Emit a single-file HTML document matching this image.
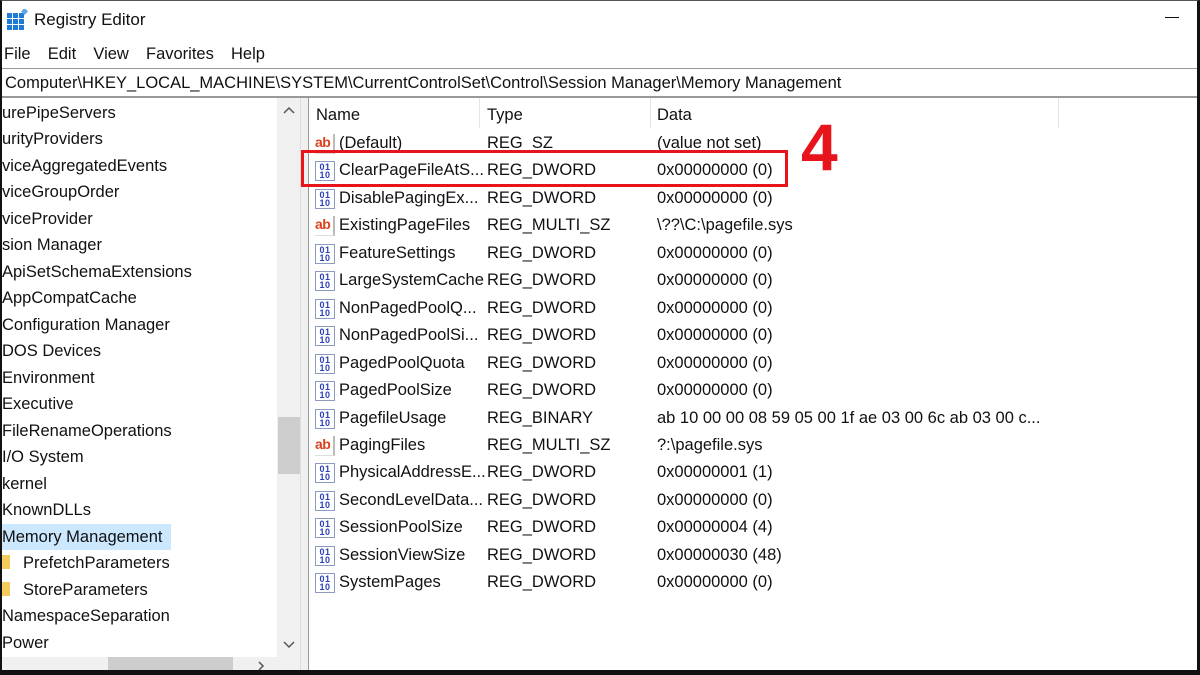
<!DOCTYPE html>
<html><head><meta charset="utf-8"><style>
*{margin:0;padding:0;box-sizing:border-box}
body{width:1200px;height:675px;overflow:hidden;background:#fff;font-family:"Liberation Sans",sans-serif;font-size:16.5px;color:#111;position:relative}
.a{position:absolute;white-space:nowrap}
.frame{position:absolute;left:0;top:0;width:1200px;height:675px;border-left:2px solid #111;border-right:3px solid #111;border-bottom:5px solid #111;border-top:1px solid #555;pointer-events:none}
.tr{position:absolute;left:2px;height:26px;line-height:26px}
.r{position:absolute;left:312px;height:27px;line-height:27px;width:760px}
.r span{position:absolute}
.ic{position:absolute;left:3px;top:4px;width:20px;height:20px}
.ab{color:#d9431e;font-weight:bold;font-size:14px;line-height:16px;border-right:2px solid #bbb;border-bottom:1px solid #ddd;letter-spacing:-0.5px}
.bin{border:1px solid #8a9cc0;background:#fff;font:bold 9px/8px "Liberation Sans",sans-serif;color:#2a3fb8;text-align:center;padding-top:1px;letter-spacing:0.5px}
</style></head><body>
<div class="a" style="left:7px;top:9px;width:20px;height:20px">
<svg width="22" height="22"><g fill="#1e7bd6"><rect x="0" y="4" width="5" height="5"/><rect x="6" y="4" width="5" height="5"/><rect x="12" y="4" width="5" height="5"/><rect x="0" y="10" width="5" height="5"/><rect x="6" y="10" width="5" height="5"/><rect x="12" y="10" width="5" height="5"/><rect x="0" y="16" width="5" height="5"/><rect x="6" y="16" width="5" height="5"/><rect x="12" y="16" width="5" height="5"/></g><rect x="15" y="0" width="5" height="5" fill="#5aa7e8" transform="rotate(45 17.5 2.5)"/></svg></div>
<div class="a" style="left:34px;top:10px;font-size:17px">Registry Editor</div>
<div class="a" style="left:1165px;top:17px;width:14px;height:1px;background:#111"></div>
<div class="a" style="left:4px;top:45px;font-size:16.5px;word-spacing:4px">File&nbsp; Edit&nbsp; View&nbsp; Favorites&nbsp; Help</div>
<div class="a" style="left:0;top:68px;width:1200px;height:1px;background:#999"></div>
<div class="a" style="left:5px;top:74px;font-size:16.5px">Computer\HKEY_LOCAL_MACHINE\SYSTEM\CurrentControlSet\Control\Session Manager\Memory Management</div>
<div class="a" style="left:0;top:96px;width:1200px;height:2px;background:#999"></div>
<div class="a" style="left:0;top:98px;width:300px;height:572px;overflow:hidden">
<div class="tr" style="top:2px">urePipeServers</div>
<div class="tr" style="top:28px">urityProviders</div>
<div class="tr" style="top:55px">viceAggregatedEvents</div>
<div class="tr" style="top:81px">viceGroupOrder</div>
<div class="tr" style="top:108px">viceProvider</div>
<div class="tr" style="top:134px">sion Manager</div>
<div class="tr" style="top:161px">ApiSetSchemaExtensions</div>
<div class="tr" style="top:187px">AppCompatCache</div>
<div class="tr" style="top:214px">Configuration Manager</div>
<div class="tr" style="top:240px">DOS Devices</div>
<div class="tr" style="top:267px">Environment</div>
<div class="tr" style="top:293px">Executive</div>
<div class="tr" style="top:320px">FileRenameOperations</div>
<div class="tr" style="top:346px">I/O System</div>
<div class="tr" style="top:373px">kernel</div>
<div class="tr" style="top:399px">KnownDLLs</div>
<div class="tr" style="top:426px;left:0;padding-left:2px;background:#cce8ff;width:171px">Memory Management</div>
<div class="a" style="left:0;top:457px;width:10px;height:14px;background:#f4cc5e"></div>
<div class="tr" style="top:452px;left:23px">PrefetchParameters</div>
<div class="a" style="left:0;top:484px;width:10px;height:14px;background:#f4cc5e"></div>
<div class="tr" style="top:479px;left:23px">StoreParameters</div>
<div class="tr" style="top:505px">NamespaceSeparation</div>
<div class="tr" style="top:532px">Power</div>
</div>
<div class="a" style="left:277px;top:98px;width:23px;height:559px;background:#f0f0f0"></div>
<div class="a" style="left:278px;top:417px;width:22px;height:57px;background:#cdcdcd"></div>
<svg class="a" style="left:282px;top:106px" width="14" height="10"><path d="M2 7 L7 2 L12 7" stroke="#555" stroke-width="1.5" fill="none"/></svg>
<svg class="a" style="left:282px;top:640px" width="14" height="10"><path d="M2 2 L7 7 L12 2" stroke="#555" stroke-width="1.5" fill="none"/></svg>
<div class="a" style="left:0;top:657px;width:300px;height:13px;background:#f0f0f0"></div>
<div class="a" style="left:108px;top:657px;width:125px;height:13px;background:#cdcdcd"></div>
<svg class="a" style="left:256px;top:660px" width="10" height="12"><path d="M3 2 L7 6 L3 10" stroke="#555" stroke-width="1.5" fill="none"/></svg>
<div class="a" style="left:300px;top:98px;width:9px;height:572px;background:#f0f0f0;border-left:1px solid #ddd;border-right:1px solid #999"></div>
<div class="a" style="left:316px;top:106px;font-size:16.5px">Name</div>
<div class="a" style="left:487px;top:106px;font-size:16.5px">Type</div>
<div class="a" style="left:657px;top:106px;font-size:16.5px">Data</div>
<div class="a" style="left:479px;top:98px;width:1px;height:30px;background:#e5e5e5"></div>
<div class="a" style="left:650px;top:98px;width:1px;height:30px;background:#e5e5e5"></div>
<div class="a" style="left:1058px;top:98px;width:1px;height:30px;background:#e5e5e5"></div>
<div id="rows"></div>
<script>
var d=[["ab","(Default)","REG_SZ","(value not set)"],
["b","ClearPageFileAtS...","REG_DWORD","0x00000000 (0)"],
["b","DisablePagingEx...","REG_DWORD","0x00000000 (0)"],
["ab","ExistingPageFiles","REG_MULTI_SZ","\\??\\C:\\pagefile.sys"],
["b","FeatureSettings","REG_DWORD","0x00000000 (0)"],
["b","LargeSystemCache","REG_DWORD","0x00000000 (0)"],
["b","NonPagedPoolQ...","REG_DWORD","0x00000000 (0)"],
["b","NonPagedPoolSi...","REG_DWORD","0x00000000 (0)"],
["b","PagedPoolQuota","REG_DWORD","0x00000000 (0)"],
["b","PagedPoolSize","REG_DWORD","0x00000000 (0)"],
["b","PagefileUsage","REG_BINARY","ab 10 00 00 08 59 05 00 1f ae 03 00 6c ab 03 00 c..."],
["ab","PagingFiles","REG_MULTI_SZ","?:\\pagefile.sys"],
["b","PhysicalAddressE...","REG_DWORD","0x00000001 (1)"],
["b","SecondLevelData...","REG_DWORD","0x00000000 (0)"],
["b","SessionPoolSize","REG_DWORD","0x00000004 (4)"],
["b","SessionViewSize","REG_DWORD","0x00000030 (48)"],
["b","SystemPages","REG_DWORD","0x00000000 (0)"]];
var h="";
d.forEach(function(r,i){var t=130+i*27.45;
var ic=r[0]=="ab"?'<div class="ic ab">ab</div>':'<div class="ic bin">01<br>10</div>';
h+='<div class="r" style="top:'+t+'px">'+ic+'<span style="left:27px">'+r[1]+'</span><span style="left:175px">'+r[2]+'</span><span style="left:345px">'+r[3]+'</span></div>';});
document.getElementById("rows").innerHTML=h;
</script>
<div class="a" style="left:301px;top:150px;width:487px;height:37px;border:3px solid #e8141b"></div>
<div class="a" style="left:801px;top:112px;font-size:66px;font-weight:bold;color:#e8141b;line-height:70px">4</div>
<div class="frame"></div>
</body></html>
